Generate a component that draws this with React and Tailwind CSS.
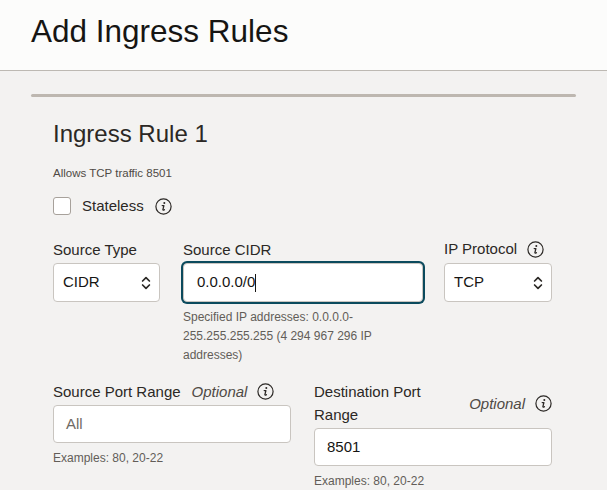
const font = { fontFamily: '"Liberation Sans", Arial, sans-serif' };

function InfoIcon() {
    return (
        <svg width="17" height="17" viewBox="0 0 17 17" className="shrink-0">
            <circle cx="8.5" cy="8.5" r="7.6" fill="none" stroke="#2b2825" strokeWidth="1.2" />
            <circle cx="9.3" cy="5" r="1" fill="#2b2825" />
            <path d="M7.2 7.6 H8.9 L7.9 11.6 C7.8 12.2 8.4 12.4 9.4 11.7" fill="none" stroke="#2b2825" strokeWidth="1.3" strokeLinecap="round" strokeLinejoin="round" />
        </svg>
    );
}

function Chevrons() {
    return (
        <svg width="10" height="16" viewBox="0 0 10 16" className="shrink-0">
            <path d="M1.6 6 L5 2.6 L8.4 6" fill="none" stroke="#2b2825" strokeWidth="1.7" strokeLinecap="round" strokeLinejoin="round" />
            <path d="M1.6 10 L5 13.4 L8.4 10" fill="none" stroke="#2b2825" strokeWidth="1.7" strokeLinecap="round" strokeLinejoin="round" />
        </svg>
    );
}

function Select({ value }) {
    return (
        <div className="h-[39px] flex items-center justify-between bg-white border border-[#c9c5c0] rounded-[4px] pl-[9px] pr-[8px] text-[15px] text-[#161513]">
            <span>{value}</span>
            <Chevrons />
        </div>
    );
}

function Helper({ children }) {
    return <p className="mt-[6px] text-[12px] leading-[19px] text-[#625d58]">{children}</p>;
}

export default function App() {
    return (
        <div style={font} className="min-h-screen bg-[#f3f2f1] text-[#161513]">
            <div className="h-[71px] bg-[#fcfcfb] border-b border-[#bdb9b3] px-[31px] pt-[11px]">
                <h1 className="text-[31.5px] leading-[40px] text-[#161513]">Add Ingress Rules</h1>
            </div>

            <div className="px-[31px] pt-[23px]">
                <div className="h-[3px] rounded-full bg-[#bdb7b0]" />

                <div className="px-[22px]">
                    <h2 className="mt-[22px] text-[24px] leading-[30px] text-[#2b2825]">Ingress Rule 1</h2>
                    <p className="mt-[16px] text-[11.5px] leading-[16px] text-[#4f4a45]">Allows TCP traffic 8501</p>

                    <div className="mt-[15px] h-[20px] flex items-center">
                        <div className="w-[18px] h-[18px] bg-white border border-[#a7a19b] rounded-[3px]" />
                        <span className="ml-[11px] text-[15px] text-[#2b2825]">Stateless</span>
                        <span className="ml-[11px]"><InfoIcon /></span>
                    </div>

                    <div className="mt-[22px] flex">
                        <div className="w-[107px]">
                            <div className="h-[23px] leading-[23px] text-[15px] text-[#2b2825]">Source Type</div>
                            <div className="mt-[2px]"><Select value="CIDR" /></div>
                        </div>
                        <div className="w-[240px] ml-[23px]">
                            <div className="h-[23px] leading-[23px] text-[15px] text-[#2b2825]">Source CIDR</div>
                            <div className="mt-[2px] h-[39px] flex items-center bg-white border border-[#c9c5c0] rounded-[4px] ring-2 ring-[#0b4a5d] pl-[13px] text-[15px] text-[#161513]">
                                <span>0.0.0.0/0</span>
                                <span className="w-px h-[18px] bg-[#161513]" />
                            </div>
                            <Helper>Specified IP addresses: 0.0.0.0-<br />255.255.255.255 (4 294 967 296 IP<br />addresses)</Helper>
                        </div>
                        <div className="w-[108px] ml-[21px]">
                            <div className="h-[23px] flex items-center text-[15px] text-[#2b2825]">
                                <span>IP Protocol</span>
                                <span className="ml-[10px]"><InfoIcon /></span>
                            </div>
                            <div className="mt-[2px]"><Select value="TCP" /></div>
                        </div>
                    </div>

                    <div className="mt-[15px] flex">
                        <div className="w-[238px]">
                            <div className="flex items-center text-[15px] leading-[23px] text-[#2b2825]">
                                <span>Source Port Range</span>
                                <span className="ml-[11px] italic text-[#4f4a45]">Optional</span>
                                <span className="ml-[10px]"><InfoIcon /></span>
                            </div>
                            <div className="mt-[2px] h-[38px] flex items-center bg-white border border-[#c9c5c0] rounded-[4px] pl-[12px] text-[15px] text-[#6f6a64]">All</div>
                            <Helper>Examples: 80, 20-22</Helper>
                        </div>
                        <div className="w-[238px] ml-[23px]">
                            <div className="flex items-center text-[15px] leading-[23px] text-[#2b2825]">
                                <span>Destination Port Range</span>
                                <span className="ml-[10px] italic text-[#4f4a45]">Optional</span>
                                <span className="ml-[10px]"><InfoIcon /></span>
                            </div>
                            <div className="mt-[2px] h-[38px] flex items-center bg-white border border-[#c9c5c0] rounded-[4px] pl-[12px] text-[15px] text-[#161513]">8501</div>
                            <Helper>Examples: 80, 20-22</Helper>
                        </div>
                    </div>
                </div>
            </div>
        </div>
    );
}
